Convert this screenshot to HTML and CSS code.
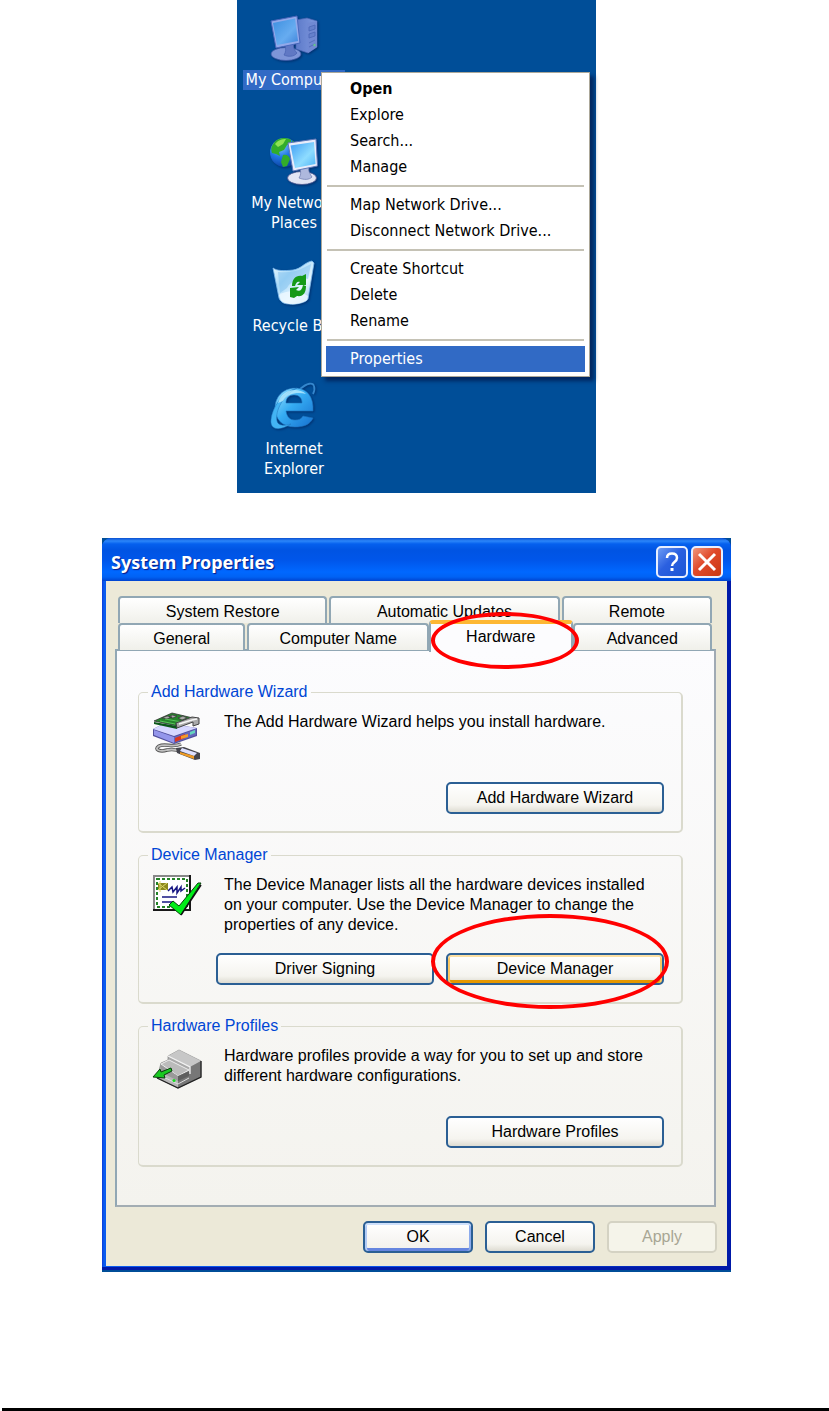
FILE: index.html
```html
<!DOCTYPE html>
<html lang="en">
<head>
<meta charset="utf-8">
<meta name="viewport" content="width=device-width, initial-scale=1">
<title>System Properties</title>
<link rel="stylesheet" href="styles.css">
</head>
<body>
<main class="page">
  <section class="desktop" aria-label="Desktop">
    <div class="shortcuts">
      <a class="shortcut selected" href="#computer">
        <svg class="icon" viewBox="0 0 48 48" aria-hidden="true">
          <defs>
            <linearGradient id="pcScreen" x1="0" y1="0" x2="1" y2="1"><stop offset="0" stop-color="#3c8fe0"/><stop offset=".6" stop-color="#67acf0"/><stop offset="1" stop-color="#3f83da"/></linearGradient>
            <linearGradient id="pcTower" x1="0" y1="0" x2="1" y2="0"><stop offset="0" stop-color="#5d7ac9"/><stop offset="1" stop-color="#7f99df"/></linearGradient>
          </defs>
          <path d="M26 6 37 4l10 3v26l-9 6-12-4z" fill="url(#pcTower)" stroke="#4766b5" stroke-width=".7"/>
          <path d="M37 9l10-2v26l-9 6z" fill="#7089d3"/>
          <path d="M39 13l6-2v4l-6 2zM39 20l6-2v4l-6 2z" fill="#6580cc" stroke="#4d68b8" stroke-width=".8"/>
          <path d="M39 29l6-3M39 33l6-3" stroke="#5470be"/>
          <circle cx="44.500" cy="31" r="1.200" fill="#65c48c"/>
          <ellipse cx="16" cy="40" rx="15" ry="6.500" fill="#7e95d8" stroke="#3c5aa8" stroke-width=".8"/>
          <path d="M15 31l9-2c-1 4 0 7 3 10-3 4-9 4-13 2 2-3 2-6 1-10z" fill="#6078c4" stroke="#4661b0" stroke-width=".7"/>
          <path d="M1 7 27 2l3 27-24 5z" fill="#92a9ea" stroke="#4a68bd" stroke-width="1"/>
          <path d="M3 9l22-4.500 3 22.500-21 4z" fill="url(#pcScreen)"/>
        </svg>
        <span class="name">My Computer</span>
      </a>
      <a class="shortcut" href="#network">
        <svg class="icon" viewBox="0 0 48 48" aria-hidden="true">
          <defs>
            <radialGradient id="globe" cx=".35" cy=".25" r=".8"><stop offset="0" stop-color="#8fd0ff"/><stop offset=".5" stop-color="#2278e6"/><stop offset="1" stop-color="#0a3f9c"/></radialGradient>
            <linearGradient id="netScreen" x1="0" y1="0" x2="1" y2="1"><stop offset="0" stop-color="#3d9cf4"/><stop offset=".6" stop-color="#8edcff"/><stop offset="1" stop-color="#4fb4f6"/></linearGradient>
          </defs>
          <circle cx="14.500" cy="15.500" r="14.500" fill="url(#globe)"/>
          <path d="M2 9C6 1 13 0 20 2c2 2 1 4-3 6l-3 5-5 2 1 4-4-2-4-1C1 13 1 11 2 9zM13 18c4-1 6 1 7 4l-3 7-4 1-2-5zM22 3l5 5-4 2z" fill="#32ad2b"/>
          <path d="M5 7c3-4 7-5 11-5l-3 5-5 3z" fill="#8fe354"/>
          <ellipse cx="32" cy="41" rx="14.500" ry="6.500" fill="#e2e5f4" stroke="#47558f" stroke-width=".8"/>
          <path d="M30 32l9-2c-1 4 1 7 3 10-3 3-8 3-13 1 2-3 2-6 1-9z" fill="#aeb8dd" stroke="#6a79ae" stroke-width=".7"/>
          <path d="M18 6 46 2l1.500 27L23 34z" fill="#e8ecfb" stroke="#5f78b8" stroke-width="1"/>
          <path d="M20.500 8.500 44 5l1.500 22L25 31z" fill="url(#netScreen)"/>
        </svg>
        <span class="name">My Network Places</span>
      </a>
      <a class="shortcut" href="#recycle">
        <svg class="icon" viewBox="0 0 48 48" aria-hidden="true">
          <defs><linearGradient id="bin" x1="0" y1="0" x2="1" y2="1"><stop offset="0" stop-color="#f5fdff"/><stop offset=".35" stop-color="#a8d9f8"/><stop offset=".65" stop-color="#e5f6ff"/><stop offset="1" stop-color="#8bbde9"/></linearGradient></defs>
          <path d="M3 8c4 3 11 3 20 2C31 9 35 2 42 1l2 2-6 36c-2 4-14 6-19 5-6 0-9-3-10-6z" fill="url(#bin)" stroke="#7dbcef" stroke-width=".8"/>
          <path d="M8 12c9 1 18 0 25-4l8-4-3 15c-9-2-18 3-21 9l-7 5z" fill="#7fc0ee" opacity=".5"/>
          <path d="M9 35c8-5 19-5 29 1l-1 4c-6 5-21 6-26 0z" fill="#eef9ff" opacity=".8"/>
          <path d="M22 26c0-7 4-11 10-10l4-2v11h-9l3-3c-3-1-4 1-5 4zM20 28l9-1-3 3c4 2 6 0 7-5l3 1c0 7-3 11-9 10l-3 2-4-1z" fill="#159a18"/>
        </svg>
        <span class="name">Recycle Bin</span>
      </a>
      <a class="shortcut" href="#internet">
        <svg class="icon" viewBox="0 0 48 48" aria-hidden="true">
          <defs><linearGradient id="ie" x1="0" y1="0" x2="1" y2="1"><stop offset="0" stop-color="#9ce3ff"/><stop offset=".45" stop-color="#35acf3"/><stop offset="1" stop-color="#1670cf"/></linearGradient></defs>
          <path d="M30 6C37 0 43-1 44 3c1 3 0 6-1 8" fill="none" stroke="#3487cd" stroke-width="1.800"/>
          <path fill-rule="evenodd" d="M43 28H16c1 6 4 9 9 9 4 0 6-1 8-4l10 2c-3 7-10 9-18 9C12 44 5 36 5 25S13 5 25 5s19 9 18 23zM16 20h16c0-5-3-8-8-8s-8 3-8 8z" fill="url(#ie)" stroke="#1d72bd" stroke-width=".6"/>
          <path d="M27 5C12 9 2 25 1 37c-1 9 7 12 20 4-6 2-13 2-14-3C5 27 13 13 27 5z" fill="#43b4f4" stroke="#2075bd" stroke-width=".5"/>
          <path d="M8 20C11 11 17 7 25 7c4 0 8 1 11 4-9-2-18-1-23 7z" fill="#c6f2ff" opacity=".7"/>
        </svg>
        <span class="name">Internet Explorer</span>
      </a>
    </div>
    <div class="menu" role="menu">
      <button class="item default" role="menuitem">Open</button>
      <button class="item" role="menuitem">Explore</button>
      <button class="item" role="menuitem">Search...</button>
      <button class="item" role="menuitem">Manage</button>
      <hr class="separator">
      <button class="item" role="menuitem">Map Network Drive...</button>
      <button class="item" role="menuitem">Disconnect Network Drive...</button>
      <hr class="separator">
      <button class="item" role="menuitem">Create Shortcut</button>
      <button class="item" role="menuitem">Delete</button>
      <button class="item" role="menuitem">Rename</button>
      <hr class="separator">
      <button class="item active" role="menuitem">Properties</button>
    </div>
  </section>

  <section class="backdrop">
    <div class="window" role="dialog" aria-labelledby="window-title">
      <header class="titlebar">
        <h1 class="title" id="window-title">System Properties</h1>
        <button class="caption help" aria-label="Help">
          <svg class="glyph" viewBox="0 0 20 20" aria-hidden="true"><path d="M5 6c0-3 2-4.500 5-4.500s5 1.500 5 4.500c0 4-5 4-5 8" fill="none" stroke="#fff" stroke-width="2.500"/><path d="M8.500 16h3v3h-3z" fill="#fff"/></svg>
        </button>
        <button class="caption close" aria-label="Close">
          <svg class="glyph" viewBox="0 0 20 20" aria-hidden="true"><path d="M2 2l16 16M18 2 2 18" stroke="#fff" stroke-width="3"/></svg>
        </button>
      </header>
      <div class="content">
        <div class="tabs" role="tablist">
          <div class="tab-row back">
            <button class="tab" role="tab">System Restore</button>
            <button class="tab" role="tab">Automatic Updates</button>
            <button class="tab" role="tab">Remote</button>
          </div>
          <div class="tab-row front">
            <button class="tab" role="tab">General</button>
            <button class="tab" role="tab">Computer Name</button>
            <button class="tab current" role="tab" aria-selected="true">Hardware<span class="ring ring-tab"></span></button>
            <button class="tab" role="tab">Advanced</button>
          </div>
        </div>
        <div class="panel" role="tabpanel">
          <fieldset class="group">
            <legend class="legend">Add Hardware Wizard</legend>
            <div class="intro">
              <svg class="icon" viewBox="0 0 48 48" aria-hidden="true">
                <path d="M28 32c-8 4-16-1-22 2-6 4 2 6 8 4 5-1 9-1 14 2" fill="none" stroke="#555" stroke-width="3.500"/>
                <path d="M28 32c-8 4-16-1-22 2-6 4 2 6 8 4 5-1 9-1 14 2" fill="none" stroke="#c0c0c0" stroke-width="1.800"/>
                <path d="M23 36l8-1 16 6v6l-5 1-18-7z" fill="#44444c"/><path d="M29 36l15 5-3 3-14-5z" fill="#dddfff"/><path d="M27 40l14 4v3l-14-5z" fill="#ef9b25"/>
                <path d="M0 17l12-6 32 5v8L21 32 0 24z" fill="#514f9c"/><path d="M0 17l12-6 32 5-23 8z" fill="#d6d7ff"/><path d="M1 18l20 7v6L1 23z" fill="#9496eb"/><path d="M21 25l22-8v6l-22 8z" fill="#6667bd"/>
                <path d="M22 26l10-4v4l-10 4z" fill="#da361f"/><path d="M28 24l7-2v3l-7 2z" fill="#f39b28"/><path d="M37 20l5-2v3l-5 2z" fill="#65d5be"/>
                <path d="M1 9 19 1l21 5-15 8z" fill="#26852c" stroke="#333" stroke-width=".8"/><path d="M1 10l23 4v3L1 12z" fill="#0b5819"/>
                <path d="M9 6l5-2 5 1-5 2zM19 3l5 1-4 2-4-1zM25 6l5-2 4 2-5 2z" fill="#aaa" stroke="#333" stroke-width=".7"/><path d="M7 9l15 3M12 7l17 3" stroke="#65d665" stroke-width=".8"/>
                <path d="M23 11l16-6 7 1v6l-6 2v-4L24 16z" fill="#aaa" stroke="#444" stroke-width="1"/><path d="M26 12l13-4 5-1" stroke="#f5f5f5" stroke-width="1.500" fill="none"/>
              </svg>
              <p class="text">The Add Hardware Wizard helps you install hardware.</p>
            </div>
            <div class="actions"><button class="button wide">Add Hardware Wizard</button></div>
          </fieldset>
          <fieldset class="group">
            <legend class="legend">Device Manager</legend>
            <div class="intro">
              <svg class="icon" viewBox="0 0 48 48" aria-hidden="true">
                <path d="M0 0h38v36H0z" fill="#181818"/><path d="M0 0h36v34H0z" fill="#888"/><path d="M2 2h34v32H2z" fill="#fff"/>
                <path d="M4 4h30v28H4z" fill="none" stroke="#238326" stroke-width="2" stroke-dasharray="3 2"/>
                <path d="M5 8h10v7H5z" fill="#8c891c"/><path d="M5 8l9 7m0-7-9 7M7 6v11" stroke="#ded96d" stroke-width="1"/>
                <path d="M15 16l4-4 1 5 4-5v6l4-6v4l4-3" fill="none" stroke="#171783" stroke-width="1.500"/>
                <path d="M9 22h15M9 27h10" stroke="#171783" stroke-width="1.500"/>
                <path d="M16 30l4-4 6 5L45 8h3L28 40z" fill="#00ec19" stroke="#063f09" stroke-width="1"/><path d="M28 40 48 10" stroke="#111" stroke-width="1.500"/>
              </svg>
              <p class="text">The Device Manager lists all the hardware devices installed on your computer. Use the Device Manager to change the properties of any device.</p>
            </div>
            <div class="actions">
              <button class="button wide">Driver Signing</button>
              <button class="button wide hot">Device Manager<span class="ring ring-button"></span></button>
            </div>
          </fieldset>
          <fieldset class="group">
            <legend class="legend">Hardware Profiles</legend>
            <div class="intro">
              <svg class="icon" viewBox="0 -4 48 48" aria-hidden="true">
                <path d="M15 6 26 0l22 11v16L25 38 4 28l4-15 7-3z" fill="#aaa" stroke="#777" stroke-width=".6"/>
                <path d="M15 6 26 0l22 11-11 6z" fill="#c7c7c7"/><path d="M37 17l11-6v16L25 38V27l12-5z" fill="#777"/>
                <path d="M15 6l22 11v7" fill="none" stroke="#f3f3f3" stroke-width="1.300"/>
                <path d="M8 14l8-4 20 10-11 6z" fill="#bbb" stroke="#ededed" stroke-width="1"/><path d="M8 15l17 11v5L8 22z" fill="#999"/><path d="M25 26l11-5v5l-11 5z" fill="#5f5f5f"/>
                <path d="M4 27l5-4 16 8v7z" fill="#b7b7b7"/><path d="M4 24l21 10 11-6" fill="none" stroke="#dfdfdf"/>
                <path d="M4 28l21 10 23-11V11" fill="none" stroke="#222" stroke-width="1.300"/>
                <circle cx="21" cy="30.500" r="1.500" fill="#16df20"/>
                <path d="M0 27l7-8 1 3 10-4 1 3-8 4 1 3z" fill="#19c921" stroke="#083d0b" stroke-width="1"/>
              </svg>
              <p class="text">Hardware profiles provide a way for you to set up and store different hardware configurations.</p>
            </div>
            <div class="actions"><button class="button wide">Hardware Profiles</button></div>
          </fieldset>
        </div>
        <footer class="dialog-actions">
          <button class="button primary">OK</button>
          <button class="button">Cancel</button>
          <button class="button" disabled>Apply</button>
        </footer>
      </div>
    </div>
  </section>
  <hr class="page-rule">
</main>
</body>
</html>
```
FILE: styles.css
```css
* { box-sizing: border-box; }

body {
  margin: 0;
  background: #fff;
  color: #000;
  font: 16px/20px "Liberation Sans", Arial, sans-serif;
}

button {
  margin: 0;
  padding: 0;
  color: inherit;
  font: inherit;
}

.page {
  display: flex;
  flex-direction: column;
  align-items: center;
  min-height: 100vh;
  padding-left: 4px;
}

.icon {
  flex: none;
  width: 48px;
  height: 48px;
  overflow: visible;
}

/* Desktop */
.desktop {
  position: relative;
  width: 100%;
  max-width: 359px;
  padding: 14px 0;
  background: #004e98;
  font-family: "DejaVu Sans Condensed", "DejaVu Sans", Tahoma, sans-serif;
}

.shortcuts {
  display: grid;
  grid-template-rows: repeat(3, 123px) auto;
  width: 114px;
}

.shortcut {
  display: flex;
  flex-direction: column;
  align-items: center;
  gap: 8px;
  color: #fff;
  text-align: center;
  text-decoration: none;
}

.shortcut .icon { filter: drop-shadow(1px 1px 1px #00306f); }
.name { padding: 0 2px; max-width: 110px; }
.selected .name { background: #316ac5; }

.menu {
  position: absolute;
  top: 72px;
  left: 84px;
  width: 269px;
  padding: 3px 4px 4px;
  border: 1px solid #aca899;
  background: #fff;
  box-shadow: 4px 4px 4px #00265f;
}

.item {
  display: block;
  width: 100%;
  height: 26px;
  padding-left: 24px;
  border: 0;
  background: none;
  text-align: left;
  white-space: nowrap;
}

.default { font-weight: bold; }
.active { background: #316ac5; color: #fff; }

.separator {
  height: 2px;
  margin: 5px 1px;
  border: 0;
  background: #c5c2b5;
}

/* Dialog window */
.backdrop {
  width: 100%;
  max-width: 629px;
  margin-top: 45px;
  padding-bottom: 2px;
  background: #004e98;
}

.window {
  padding: 0 4px 4px;
  border-radius: 9px 9px 0 0;
  background: linear-gradient(90deg, #0a3bd9 0, #0a5cf0 2px, #0a50e8 50%, #0019a8 100%);
  box-shadow: inset 0 -3px #0019a8;
}

.titlebar {
  display: flex;
  align-items: center;
  gap: 3px;
  height: 43px;
  margin: 0 -4px;
  padding: 4px 8px 0 9px;
  border-radius: 9px 9px 0 0;
  background: linear-gradient(#0a4fd0 0, #2b86fa 3px, #0560ee 6px, #0054e3 12px, #0056ea 22px, #0068ff 34px, #0062f4 39px, #0043cf 43px);
}

.title {
  flex: 1;
  margin: 0;
  color: #fff;
  font: bold 18px/24px "Noto Sans", "Open Sans", sans-serif;
  text-shadow: 1px 1px 1px #0a1883;
}

.caption {
  display: grid;
  place-items: center;
  width: 32px;
  height: 32px;
  border: 2px solid #e8efff;
  border-radius: 5px;
}

.help { background: linear-gradient(135deg, #6d9cf5, #2b60e0 45%, #1c55d5); }
.close { background: linear-gradient(135deg, #f0967c, #e0492a 45%, #c93812); }
.glyph { width: 20px; height: 20px; }

.content {
  padding: 15px 11px 13px 9px;
  background: #ece9d8;
}

.tabs { padding: 0 4px 0 3px; }

.tab-row {
  display: grid;
  align-items: end;
}

.back { grid-template-columns: 209fr 230fr 150fr; gap: 2px; }
.front { grid-template-columns: 127fr 183fr 143fr 139fr; }

.tab {
  height: 27px;
  padding: 2px 0 0;
  border: 2px solid #91a7b4;
  border-bottom: 0;
  border-radius: 4px 4px 0 0;
  background: linear-gradient(#fff, #f0f0ea);
  white-space: nowrap;
}

.front .tab:nth-child(2) { margin-left: 2px; }

.front .current {
  position: relative;
  height: 32px;
  margin: -4px 0 -2px;
  padding-bottom: 4px;
  border-top: 4px solid #fdb733;
  background: #fcfcfe;
}

.panel {
  display: grid;
  gap: 12px;
  margin-top: -1px;
  padding: 31px 31px 38px 21px;
  border: 2px solid #91a7b4;
  border-color: #91a7b4 #a0aab4 #a3adb3 #91a7b4;
  background: linear-gradient(#fcfcfe, #f4f3ee);
}

.group {
  min-width: 0;
  margin: 0;
  padding: 10px 17px 17px 14px;
  border: 2px solid #dadacd;
  border-width: 1px 2px 2px 1px;
  border-radius: 5px;
}

.legend {
  height: 20px;
  margin-left: -5px;
  padding: 0 3px;
  color: #0046d5;
}

.intro {
  display: flex;
  gap: 23px;
  min-height: 52px;
}

.text {
  max-width: 430px;
  margin: 0;
}

.actions,
.dialog-actions {
  display: flex;
  justify-content: flex-end;
  gap: 12px;
}

.actions { margin-top: 18px; }
.dialog-actions { margin: 14px -1px 0 0; }

.button {
  width: 110px;
  height: 32px;
  border: 2px solid #2b5f94;
  border-radius: 5px;
  background: linear-gradient(#fff, #f5f4ef 75%, #dedcd2);
}

.wide { width: 218px; }

.primary {
  background: linear-gradient(#fff, #f1f0eb);
  box-shadow: inset 0 2px #cee0fb, inset 2px 0 #b2cbf5, inset -2px 0 #8cabec, inset 0 -3px #6585df;
}

.hot {
  position: relative;
  box-shadow: inset 0 2px #fde0a3, inset 2px 0 #fbc761, inset -2px 0 #fbc761, inset 0 -3px #e59700;
}

.button:disabled {
  border-color: #d4d2c3;
  background: #f5f4ea;
  color: #a8a694;
}

/* Red ovals around the controls to click */
.ring {
  position: absolute;
  z-index: 1;
  border: 4px solid #f00;
  border-radius: 50%;
  pointer-events: none;
}

.ring-tab { inset: -12px -8px -17px 0; }
.ring-button { inset: -41px -7px -26px -17px; }

.page-rule {
  align-self: stretch;
  height: 3px;
  margin: auto 0 0 -2px;
  border: 0;
  background: #000;
}
```
